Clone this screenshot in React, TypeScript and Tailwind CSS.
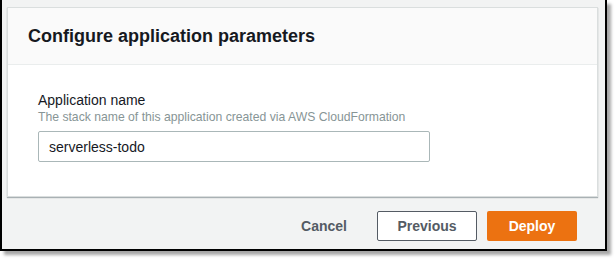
import React from "react";

const App = () => {
    return (
        <div className="w-[616px] h-[261px] bg-white" style={{ fontFamily: '"Liberation Sans", Arial, sans-serif' }}>
            <div className="w-[607px] h-[251px] bg-[#f2f3f3] border-x-2 border-b-2 border-black shadow-[4px_4px_3px_rgba(0,0,0,0.35)] pl-[5px] pr-[7px] pt-[7px] flex flex-col">
                {/* card */}
                <div className="border border-[#dadede] bg-white shadow-[0_1px_1px_0_rgba(0,28,36,0.3)]">
                    <div className="h-[57px] bg-[#fafafa] border-b border-[#eaeded] flex items-center pl-5">
                        <h2 className="text-[18px] font-bold text-[#16191f]">Configure application parameters</h2>
                    </div>
                    <div className="pl-[30px] pt-[26px] pb-[34px]">
                        <div className="text-[14px] leading-[18px] text-[#16191f]">Application name</div>
                        <div className="text-[12.2px] leading-[16px] text-[#879596]">The stack name of this application created via AWS CloudFormation</div>
                        <input
                            className="mt-[6px] w-[392px] h-[31px] border border-[#aab7b8] rounded-[2px] px-[10px] text-[14px] text-[#16191f] outline-none"
                            defaultValue="serverless-todo"
                        />
                    </div>
                </div>
                {/* actions */}
                <div className="flex justify-end items-center gap-[10px] mt-[14px] pr-[21px]">
                    <button className="h-[30px] px-5 text-[14px] font-bold text-[#545b64]">Cancel</button>
                    <button className="h-[30px] w-[100px] border border-[#545b64] rounded-[2px] bg-white text-[14px] font-bold text-[#545b64]">Previous</button>
                    <button className="h-[30px] w-[90px] rounded-[2px] bg-[#ec7211] text-[14px] font-bold text-white">Deploy</button>
                </div>
            </div>
        </div>
    );
};

export default App;
